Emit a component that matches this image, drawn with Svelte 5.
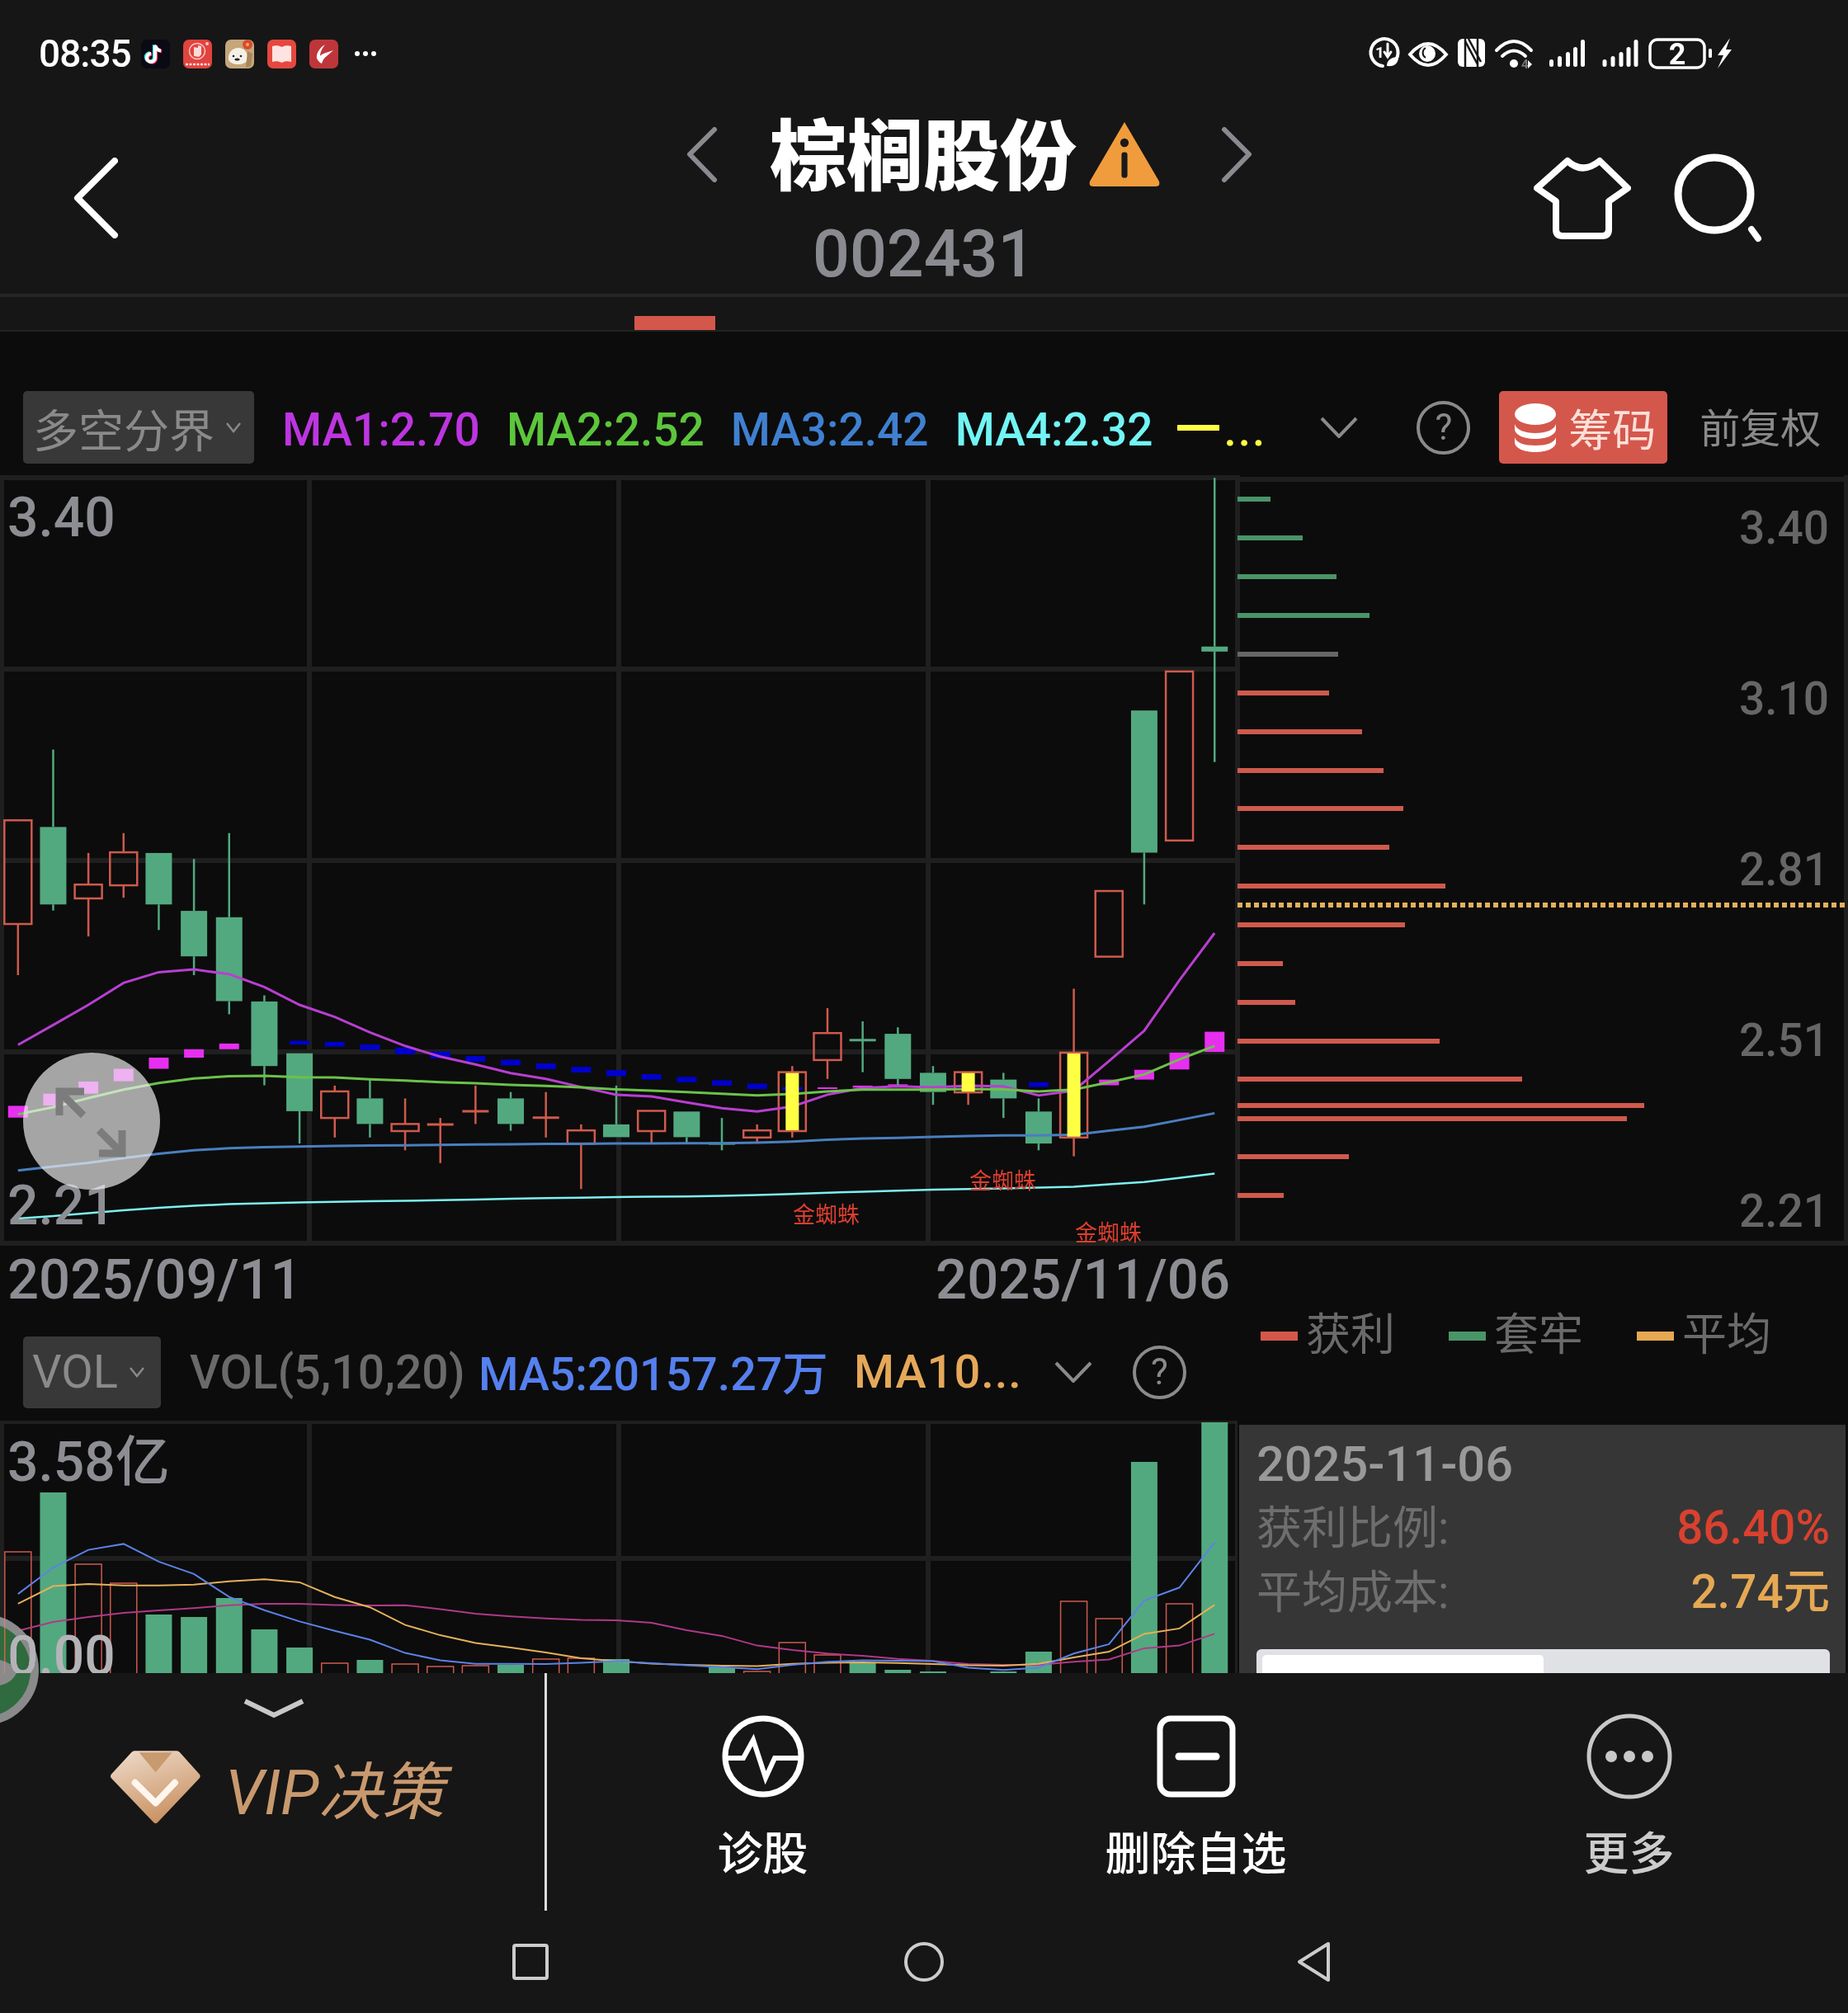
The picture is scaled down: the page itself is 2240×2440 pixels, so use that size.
<script lang="ts">
	const GREEN = '#53a97f';
	const RED = '#cf5a4d';

	// candle slots shared by both charts
	const kx = (i: number) => 21.8 + 42.66 * i;
	// values below were read off a zoomed crop, these bring them back to page y
	const ky = (v: number) => +(880 + v / 2.45).toFixed(1);
	const vy = (v: number) => +(1500 + v / 2.8).toFixed(1);

	// type, wick top, body top, body bottom, wick bottom, yellow marker
	const candles: [string, number, number, number, number, boolean?][] = [
		['r', 280, 280, 588, 740],
		['g', 70, 300, 530, 548],
		['r', 377, 471, 512, 625],
		['r', 318, 375, 473, 510],
		['g', 377, 377, 530, 606],
		['g', 395, 549, 684, 740],
		['g', 318, 568, 817, 856],
		['g', 800, 818, 1010, 1067],
		['g', 972, 972, 1144, 1240],
		['r', 1068, 1085, 1164, 1222],
		['g', 1048, 1106, 1182, 1222],
		['r', 1106, 1182, 1203, 1260],
		['r', 1164, 1183, 1183, 1298],
		['r', 1068, 1144, 1144, 1182],
		['g', 1087, 1106, 1182, 1202],
		['r', 1087, 1163, 1163, 1222],
		['r', 1183, 1201, 1240, 1375],
		['g', 1068, 1183, 1221, 1221],
		['r', 1143, 1143, 1203, 1240],
		['g', 1145, 1145, 1221, 1240],
		['g', 1164, 1240, 1240, 1260],
		['r', 1183, 1201, 1222, 1240],
		['r', 1010, 1028, 1203, 1222, true],
		['r', 838, 912, 992, 1048],
		['g', 877, 933, 933, 1028],
		['g', 895, 914, 1048, 1068],
		['g', 1010, 1030, 1087, 1125],
		['r', 1028, 1028, 1088, 1125, true],
		['g', 1030, 1050, 1106, 1164],
		['g', 1106, 1145, 1240, 1260],
		['r', 780, 970, 1222, 1278, true],
		['r', 490, 490, 685, 685],
		['g', -46, -46, 376, 530],
		['r', -162, -162, 340, 340],
		['g', -737, -236, -221, 107]
	];

	// index, top, bottom, colour of the 多空分界 blocks
	const blocks: [number, number, number, string][] = [
		[0, 1128, 1163, 'm'], [1, 1092, 1127, 'm'], [2, 1056, 1092, 'm'], [3, 1018, 1055, 'm'],
		[4, 985, 1018, 'm'], [5, 960, 985, 'm'], [6, 943, 960, 'm'], [7, 937, 945, 'm'],
		[8, 935, 946, 'b'], [9, 938, 952, 'b'], [10, 946, 962, 'b'], [11, 955, 975, 'b'],
		[12, 967, 987, 'b'], [13, 980, 997, 'b'], [14, 991, 1008, 'b'], [15, 1002, 1019, 'b'],
		[16, 1012, 1029, 'b'], [17, 1022, 1040, 'b'], [18, 1034, 1050, 'b'], [19, 1042, 1058, 'b'],
		[20, 1052, 1068, 'b'], [21, 1062, 1078, 'b'], [22, 1072, 1082, 'b'], [23, 1073, 1078, 'm'],
		[24, 1068, 1074, 'm'], [25, 1064, 1068, 'm'], [28, 1058, 1066, 'b'], [29, 1058, 1072, 'b'],
		[31, 1050, 1067, 'm'], [32, 1021, 1050, 'm'], [33, 970, 1020, 'm'], [34, 908, 968, 'm']
	];

	const maLines = [
		{
			color: '#b83fd0',
			w: 3,
			ys: [947, 888, 828, 763, 731, 723, 737, 775, 828, 864, 910, 950, 982, 1005, 1031, 1048, 1072, 1095, 1100, 1118, 1135, 1145, 1130, 1095, 1075, 1070, 1073, 1068, 1070, 1097, 1083, 995, 905, 755, 615]
		},
		{
			color: '#6cc24a',
			w: 3,
			ys: [1153, 1132, 1105, 1080, 1060, 1047, 1040, 1039, 1043, 1044, 1049, 1053, 1058, 1061, 1066, 1069, 1073, 1079, 1083, 1087, 1092, 1097, 1093, 1085, 1080, 1080, 1080, 1078, 1079, 1085, 1080, 1058, 1035, 990, 950]
		},
		{
			color: '#4a7fc0',
			w: 3,
			ys: [1320, 1308, 1297, 1283, 1270, 1260, 1254, 1251, 1249, 1247, 1246, 1245, 1244, 1243, 1242, 1241, 1241, 1240, 1240, 1239, 1239, 1237, 1234, 1229, 1225, 1223, 1220, 1218, 1216, 1216, 1214, 1202, 1190, 1170, 1150]
		},
		{
			color: '#7ff0f0',
			w: 2.5,
			ys: [1463, 1455, 1447, 1438, 1431, 1425, 1420, 1417, 1415, 1413, 1411, 1410, 1408, 1406, 1404, 1402, 1401, 1399, 1398, 1397, 1395, 1393, 1390, 1386, 1383, 1380, 1377, 1375, 1373, 1371, 1368, 1361, 1354, 1342, 1329]
		}
	];

	const volBars: (['r' | 'g', number] | null)[] = [
		['r', 1881], ['g', 1809], ['r', 1896], ['r', 1919], ['g', 1957], ['g', 1960], ['g', 1937],
		['g', 1975], ['g', 1997], ['r', 2016], ['g', 2012], ['r', 2017], ['r', 2020], ['r', 2019],
		['g', 2018], ['r', 2011], ['r', 2010], ['g', 2011], null, null, ['g', 2021], ['r', 2026],
		['r', 1991], ['r', 2006], ['g', 2016], ['g', 2024], ['g', 2026], null, ['g', 2026],
		['g', 2002], ['r', 1941], ['r', 1962], ['g', 1772], ['r', 1944], ['g', 1724]
	];

	const volLines = [
		{
			color: '#b0388a',
			ys: [1335, 1305, 1288, 1274, 1266, 1258, 1248, 1243, 1243, 1247, 1249, 1248, 1261, 1277, 1286, 1293, 1298, 1299, 1308, 1333, 1352, 1385, 1400, 1412, 1420, 1430, 1437, 1448, 1450, 1450, 1440, 1432, 1394, 1385, 1345]
		},
		{
			color: '#e5b05a',
			ys: [1243, 1183, 1176, 1181, 1181, 1178, 1167, 1160, 1170, 1220, 1255, 1315, 1350, 1376, 1392, 1408, 1428, 1438, 1446, 1450, 1453, 1455, 1447, 1443, 1442, 1444, 1448, 1452, 1453, 1447, 1425, 1406, 1345, 1327, 1247]
		},
		{
			color: '#5b82e6',
			ys: [1210, 1120, 1060, 1040, 1100, 1142, 1220, 1265, 1303, 1335, 1365, 1410, 1435, 1447, 1447, 1448, 1443, 1438, 1445, 1452, 1458, 1465, 1450, 1440, 1435, 1436, 1438, 1460, 1468, 1460, 1412, 1380, 1232, 1188, 1035]
		}
	];

	// y, right end of each price level bar
	const chips: [number, number, string][] = [
		[605, 1540, '#4a9468'], [652, 1579, '#4a9468'], [699, 1620, '#4a9468'], [746, 1660, '#4a9468'],
		[793, 1622, '#666666'], [840, 1611, RED], [887, 1651, RED], [934, 1677, RED], [980, 1701, RED],
		[1027, 1684, RED], [1074, 1752, RED], [1121, 1703, RED], [1168, 1555, RED], [1215, 1570, RED],
		[1262, 1745, RED], [1308, 1845, RED], [1340, 1993, RED], [1356, 1972, RED], [1402, 1635, RED],
		[1449, 1556, RED]
	];

	const priceLabels: [string, number][] = [
		['3.40', 659], ['3.10', 866], ['2.81', 1073], ['2.51', 1280], ['2.21', 1487]
	];

	const kGridV = [2, 375, 750, 1125, 1500];
	const kGridH = [579, 811, 1043, 1275, 1507];

	const points = (ys: number[], conv: (v: number) => number) =>
		ys.map((v, i) => `${kx(i).toFixed(1)},${conv(v)}`).join(' ');
</script>

<div class="page">
	<header class="top">
		<div class="status">
			<span class="clock">08:35</span>
			<div class="apps">
				<svg viewBox="0 0 35 35" class="app">
					<rect width="35" height="35" rx="7" fill="#0a0a14" />
					<g fill="none" stroke-width="4">
						<path d="M17 7v15a5 5 0 1 1-5-5M17 7c1 4 3 6 7 6.500" stroke="#3fe0e0" transform="translate(-1.200 -.8)" />
						<path d="M17 7v15a5 5 0 1 1-5-5M17 7c1 4 3 6 7 6.500" stroke="#f0335a" transform="translate(1.200 .8)" />
						<path d="M17 7v15a5 5 0 1 1-5-5M17 7c1 4 3 6 7 6.500" stroke="#fff" />
					</g>
				</svg>
				<svg viewBox="0 0 35 35" class="app">
					<rect width="35" height="35" rx="7" fill="#e2433e" />
					<circle cx="17" cy="14" r="9.500" fill="none" stroke="#f7c9c4" stroke-width="1.500" />
					<path d="M13 9l5 1 0-3 4 1 0 10-3 3-6-1z" fill="#f8dcd8" />
					<circle cx="29" cy="5" r="2" fill="#f7c9c4" />
					<path d="M3 30h29" stroke="#fbe3e0" stroke-width="2.500" stroke-dasharray="3 1.500" />
				</svg>
				<svg viewBox="0 0 35 35" class="app">
					<rect width="35" height="35" rx="7" fill="#c6a67a" />
					<path d="M4 24c-1-8 5-14 12-14s12 6 11 14c-2 8-21 8-23 0z" fill="#f5f0e6" />
					<path d="M27 14l6 3-2 15-6 2z" fill="#a98558" />
					<circle cx="27" cy="6" r="6" fill="#d84a32" />
					<circle cx="27" cy="6" r="2" fill="#f0b040" />
					<circle cx="10" cy="20" r="1.300" fill="#222" />
					<circle cx="19" cy="20" r="1.300" fill="#222" />
					<ellipse cx="14.500" cy="24" rx="3" ry="1.500" fill="#222" />
				</svg>
				<svg viewBox="0 0 35 35" class="app">
					<rect width="35" height="35" rx="7" fill="#e5483f" />
					<path d="M6 8c4-1 8-1 11.500 1 3.500-2 8-2 11.500-1v19c-4-1-8-1-11.500 1-3.500-2-8-2-11.500-1z" fill="#fde4e0" />
				</svg>
				<svg viewBox="0 0 35 35" class="app">
					<rect width="35" height="35" rx="7" fill="#bf363a" />
					<path d="M19 6c-5 3-9 8-10 13-1 4 2 8 6 10 1-4 3-7 6-9l8-7-9 3c-3 1-6 2-7 4 0-5 3-10 6-14z" fill="#fff" />
				</svg>
			</div>
			<span class="more-dots"><i></i><i></i><i></i></span>
			<svg class="sys" viewBox="0 0 460 60">
				<g fill="none" stroke="#fff" stroke-linecap="round">
					<path d="M41 40A16.500 16.500 0 1 0 27 45" stroke-width="4" />
					<path d="M33 18v16M29 28l4 6 4-6" stroke-width="3" />
				</g>
				<text x="18" y="35" class="sys-num">1</text>
				<path d="M32 45c0-7 5-11 14-11 0 8-5 12-14 11z" fill="#fff" />
				<path d="M60 31Q82 5 104 31Q82 57 60 31Z" fill="none" stroke="#fff" stroke-width="4" />
				<circle cx="81" cy="30" r="10" fill="#fff" />
				<path d="M79 23a7 7 0 0 0 0 12" fill="none" stroke="#161616" stroke-width="2" />
				<rect x="118" y="12" width="33" height="34" rx="6" fill="#fff" />
				<path d="M127 12v34M142 12v34" stroke="#161616" stroke-width="2.500" />
				<path d="M127 15l15 28M131 12l15 28" stroke="#161616" stroke-width="2.500" />
				<g fill="none" stroke="#fff" stroke-width="4" stroke-linecap="round">
					<path d="M165 26Q186 4 207 26" />
					<path d="M172 33Q186 20 200 33" />
				</g>
				<circle cx="186" cy="42" r="5" fill="#fff" />
				<text x="195" y="48" class="sys-small">4</text>
				<path d="M203 38l5 5-5 5z" fill="#fff" />
				{#each [0, 64.5] as off}
					<g fill="#fff" transform="translate({off} 0)">
						<rect x="229" y="37" width="5" height="9" rx="2.500" />
						<rect x="239" y="33" width="5" height="13" rx="2.500" />
						<rect x="249" y="28" width="5" height="18" rx="2.500" />
						<rect x="258" y="22" width="5" height="24" rx="2.500" />
						<rect x="267" y="13" width="5" height="33" rx="2.500" />
					</g>
				{/each}
				<rect x="351" y="13" width="66" height="34" rx="9" fill="none" stroke="#fff" stroke-width="3.500" />
				<text x="384" y="43" class="sys-batt">2</text>
				<rect x="422" y="24" width="4" height="11" rx="1.500" fill="#fff" />
				<path d="M448 11L433 32h7L433 48 450 25h-7z" fill="#fff" />
			</svg>
		</div>

		<div class="nav">
			<svg class="back" viewBox="0 0 54 98">
				<path d="M50 4L5 49l45 45" fill="none" stroke="#fff" stroke-width="8" stroke-linecap="round" stroke-linejoin="round" />
			</svg>
			<div class="title-block">
				<div class="title-row">
					<svg class="side" viewBox="0 0 38 67">
						<path d="M34 3L4 33l30 31" fill="none" stroke="#8a8b90" stroke-width="6" stroke-linecap="round" stroke-linejoin="round" />
					</svg>
					<h1>棕榈股份</h1>
					<svg class="warn" viewBox="0 0 86 80" preserveAspectRatio="none">
						<path d="M43 3L84 72q2 6-4 6H6q-6 0-4-6z" fill="#f09c3c" />
						<circle cx="43" cy="27" r="5" fill="#1a1a1a" />
						<rect x="39.500" y="38" width="7" height="30" rx="3" fill="#1a1a1a" />
					</svg>
					<svg class="side side-r" viewBox="0 0 38 67">
						<path d="M4 3l30 30L4 64" fill="none" stroke="#8a8b90" stroke-width="6" stroke-linecap="round" stroke-linejoin="round" />
					</svg>
				</div>
				<div class="code">002431</div>
			</div>
			<div class="nav-actions">
				<svg class="shirt" viewBox="0 0 118 100">
					<path d="M41 5Q59 22 80 5L114 38 91 54V88q0 8-8 8H35q-8 0-8-8V54L4 38Z" fill="none" stroke="#fff" stroke-width="8" stroke-linejoin="round" />
				</svg>
				<svg class="search" viewBox="0 0 110 110">
					<circle cx="50" cy="50" r="44" fill="none" stroke="#fff" stroke-width="9" />
					<path d="M95 93l8 11" stroke="#fff" stroke-width="8" stroke-linecap="round" />
				</svg>
			</div>
		</div>
		<div class="tabs"><span class="tab-mark"></span></div>
	</header>

	<main class="body">
		<div class="toolbar">
			<div class="chip chip-ma">多空分界<svg class="caret" viewBox="0 0 18 14"><path d="M1 2l8 10 8-10" /></svg></div>
			<span class="ma" style="color:#bd35e0">MA1:2.70</span>
			<span class="ma" style="color:#5cc63c">MA2:2.52</span>
			<span class="ma" style="color:#3f80d0">MA3:2.42</span>
			<span class="ma" style="color:#72f5f5">MA4:2.32</span>
			<span class="ma5-dash"></span>
			<span class="ma ma5-dots">...</span>
			<svg class="chev chev-ma" viewBox="0 0 46 26"><path d="M2 2l21 22L44 2" /></svg>
			<span class="help help-ma">?</span>
			<button class="chouma">
				<svg viewBox="0 0 52 60" class="coins">
					<ellipse cx="26" cy="14" rx="25" ry="13" fill="#fff" />
					<path d="M1 26c2 7 12 11 25 11s23-4 25-11v6c0 7-11 12-25 12S1 39 1 32z" fill="#fff" />
					<path d="M1 42c2 7 12 10 25 10s23-3 25-10v6c0 7-11 12-25 12S1 55 1 48z" fill="#fff" />
				</svg>
				筹码
			</button>
			<span class="fuquan">前复权</span>
		</div>

		<div class="charts">
			<div class="left">
				<div class="kline">
					<svg viewBox="0 576 1500 934" class="chart-svg">
						{#each kGridV as x}
							<line x1={x} x2={x} y1="576" y2="1510" class="grid" />
						{/each}
						{#each kGridH as y}
							<line x1="0" x2="1502" y1={y} y2={y} class="grid" />
						{/each}
						{#each blocks as [i, t, b, c]}
							<rect x={kx(i) - 12} y={ky(t)} width="24" height={ky(b) - ky(t)} fill={c === 'm' ? '#e72ff0' : '#0000cc'} />
						{/each}
						{#each candles as [type, wt, bt, bb, wb, marker], i}
							{@const col = type === 'g' ? GREEN : RED}
							<line x1={kx(i)} x2={kx(i)} y1={ky(wt)} y2={ky(bt)} stroke={col} stroke-width="2.500" />
							<line x1={kx(i)} x2={kx(i)} y1={ky(bb)} y2={ky(wb)} stroke={col} stroke-width="2.500" />
							{#if bt === bb}
								<line x1={kx(i) - 16} x2={kx(i) + 16} y1={ky(bt)} y2={ky(bt)} stroke={col} stroke-width="3" />
							{:else if type === 'g'}
								<rect x={kx(i) - 16} y={ky(bt)} width="32" height={ky(bb) - ky(bt)} fill={col} />
							{:else}
								<rect x={kx(i) - 16.500} y={ky(bt)} width="33" height={ky(bb) - ky(bt)} fill="none" stroke={col} stroke-width="2.500" />
							{/if}
						{/each}
						{#each maLines as l}
							<polyline points={points(l.ys, ky)} fill="none" stroke={l.color} stroke-width={l.w} />
						{/each}
						{#each candles as [, , bt, bb, , marker], i}
							{#if marker}
								<rect x={kx(i) - 8} y={ky(bt) + 1} width="16" height={ky(bb) - ky(bt) - 2} fill="#ffff44" />
							{/if}
						{/each}
						<text x="961" y="1482" class="spider">金蜘蛛</text>
						<text x="1175" y="1441" class="spider">金蜘蛛</text>
						<text x="1303" y="1504" class="spider">金蜘蛛</text>
						<text x="9" y="650" class="axis">3.40</text>
						<text x="9" y="1484" class="axis">2.21</text>
					</svg>
					<div class="float-ball">
						<svg viewBox="0 0 166 166">
							<path d="M44 76V47h30M47 50l26 26" fill="none" stroke="#7c7c7c" stroke-width="9" />
							<path d="M120 94v28H92M118 120l-26-26" fill="none" stroke="#7c7c7c" stroke-width="9" />
						</svg>
					</div>
				</div>

				<div class="dates">
					<span>2025/09/11</span>
					<span>2025/11/06</span>
				</div>

				<div class="vol-bar">
					<div class="chip chip-vol">VOL<svg class="caret" viewBox="0 0 18 14"><path d="M1 2l8 10 8-10" /></svg></div>
					<span class="vol-name">VOL(5,10,20)</span>
					<span class="vol-ma5">MA5:20157.27万</span>
					<span class="vol-ma10">MA10...</span>
					<svg class="chev chev-vol" viewBox="0 0 46 26"><path d="M2 2l21 22L44 2" /></svg>
					<span class="help help-vol">?</span>
				</div>

				<div class="vol">
					<svg viewBox="0 1722 1500 306" class="chart-svg">
						{#each kGridV as x}
							<line x1={x} x2={x} y1="1722" y2="2028" class="grid" />
						{/each}
						<line x1="0" x2="1502" y1="1723" y2="1723" class="grid" />
						<line x1="0" x2="1502" y1="1889" y2="1889" class="grid" />
						{#each volBars as bar, i}
							{#if bar}
								{#if bar[0] === 'g'}
									<rect x={kx(i) - 16} y={bar[1]} width="32" height={2040 - bar[1]} fill={GREEN} />
								{:else}
									<rect x={kx(i) - 16} y={bar[1]} width="32" height={2040 - bar[1]} fill="none" stroke={RED} stroke-width="1.500" />
								{/if}
							{/if}
						{/each}
						{#each volLines as l}
							<polyline points={points(l.ys, vy)} fill="none" stroke={l.color} stroke-width="2" />
						{/each}
						<text x="9" y="1795" class="axis">3.58亿</text>
						<text x="9" y="2030" class="axis zero">0.00</text>
					</svg>
				</div>
			</div>

			<div class="right">
				<svg viewBox="1500 576 740 934" class="chart-svg">
					<line x1="1500" x2="1500" y1="576" y2="1510" class="grid" />
					<line x1="1500" x2="2240" y1="581" y2="581" class="grid" />
					<line x1="1500" x2="2240" y1="1507" y2="1507" class="grid" />
					<line x1="2238" x2="2238" y1="576" y2="1510" class="grid" stroke-width="3" />
					{#each chips as [y, end, color]}
						<rect x="1500" y={y - 3} width={end - 1500} height="6" fill={color} />
					{/each}
					<line x1="1500" x2="2238" y1="1097" y2="1097" stroke="#e5b05a" stroke-width="6" stroke-dasharray="6 4" />
					{#each priceLabels as [label, y]}
						<text x="2217" y={y} class="price">{label}</text>
					{/each}
				</svg>

				<div class="legend">
					<div class="lg"><i style="background:#d4574c"></i>获利</div>
					<div class="lg"><i style="background:#4a9468"></i>套牢</div>
					<div class="lg"><i style="background:#e5a853"></i>平均</div>
				</div>

				<div class="info">
					<div class="info-date">2025-11-06</div>
					<div class="info-row">
						<span>获利比例:</span><b class="profit">86.40%</b>
					</div>
					<div class="info-row second">
						<span>平均成本:</span><b class="cost">2.74元</b>
					</div>
					<div class="progress"><div class="progress-fill"></div></div>
				</div>
			</div>
		</div>
	</main>

	<footer class="foot">
		<div class="foot-top">
			<div class="vip">
				<svg class="vip-chev" viewBox="0 0 76 24">
					<path d="M3 3l35 17L73 3" fill="none" stroke="#c8c8c8" stroke-width="6" />
				</svg>
				<div class="vip-logo">
					<svg class="diamond" viewBox="0 0 333 266">
						<defs>
							<linearGradient id="dia" x1="0.2" y1="0" x2="0.6" y2="1">
								<stop offset="0" stop-color="#ecd8c6" />
								<stop offset="1" stop-color="#c88f5e" />
							</linearGradient>
						</defs>
						<path d="M90 0H244Q250 0 254 5L326 85Q332 93 326 100L175 260Q167 268 159 260L6 100Q0 93 6 85L80 5Q84 0 90 0Z" fill="url(#dia)" />
						<path d="M107 6H227L167 78Z" fill="#c89a6f" />
						<path d="M92 116L167 190 237 116" fill="none" stroke="#fff6ee" stroke-width="24" stroke-linecap="round" stroke-linejoin="round" />
					</svg>
					<span class="vip-text">VIP决策</span>
				</div>
			</div>
			<div class="actions">
				<div class="action">
					<svg viewBox="0 0 100 100">
						<circle cx="50" cy="50" r="46" fill="none" stroke="#fff" stroke-width="7" />
						<path d="M6 52H26L38 30 53 76 64 52H94" fill="none" stroke="#fff" stroke-width="6" stroke-linejoin="miter" />
					</svg>
					<span>诊股</span>
				</div>
				<div class="action">
					<svg viewBox="0 0 100 100">
						<rect x="6" y="4" width="88" height="92" rx="13" fill="none" stroke="#fff" stroke-width="7" />
						<path d="M29 50H74" stroke="#fff" stroke-width="9" stroke-linecap="round" />
					</svg>
					<span>删除自选</span>
				</div>
				<div class="action dim">
					<svg viewBox="0 0 106 106">
						<circle cx="53" cy="53" r="49" fill="none" stroke="#c8c8c8" stroke-width="5" />
						<circle cx="31" cy="53" r="7" fill="#c8c8c8" />
						<circle cx="53" cy="53" r="7" fill="#c8c8c8" />
						<circle cx="75" cy="53" r="7" fill="#c8c8c8" />
					</svg>
					<span>更多</span>
				</div>
			</div>
		</div>
		<div class="sysnav">
			<svg width="44" height="44" viewBox="0 0 44 44"><rect x="2" y="2" width="40" height="40" rx="2" fill="none" stroke="#ccc" stroke-width="4" /></svg>
			<svg width="48" height="48" viewBox="0 0 48 48"><circle cx="24" cy="24" r="22" fill="none" stroke="#ccc" stroke-width="4" /></svg>
			<svg class="nav-back" width="40" height="50" viewBox="0 0 40 50"><path d="M38 3V47L3 25Z" fill="none" stroke="#ccc" stroke-width="4" stroke-linejoin="round" /></svg>
		</div>
	</footer>

	<div class="side-ball">
		<svg viewBox="0 0 50 134">
			<circle cx="-20" cy="67" r="62" fill="#2f6b3e" stroke="#8a8a8a" stroke-width="10" />
			<path d="M0 55q16 4 21 14q-6 14-21 17z" fill="#8a8a8a" />
		</svg>
	</div>
</div>

<style>
	:global(body) {
		background: #0c0c0c;
	}

	.page {
		position: relative;
		width: 2240px;
		height: 2440px;
		overflow: hidden;
		display: flex;
		flex-direction: column;
		font-family: Roboto, 'Noto Sans CJK SC', sans-serif;
		background: #0c0c0c;
	}

	.top {
		height: 402px;
		flex: none;
		background: #161616;
		box-sizing: border-box;
		border-bottom: 2px solid #222;
	}

	.status {
		height: 130px;
		display: flex;
		align-items: center;
		padding-left: 47px;
		box-sizing: border-box;
	}

	.clock {
		color: #fff;
		font-size: 46px;
		font-weight: 500;
		width: 124px;
		letter-spacing: -1px;
	}

	.apps {
		display: flex;
		gap: 16px;
	}

	.app {
		width: 35px;
		height: 35px;
		display: block;
	}

	.more-dots {
		display: flex;
		gap: 4px;
		margin-left: 20px;
	}

	.more-dots i {
		width: 6px;
		height: 6px;
		border-radius: 50%;
		background: #fff;
	}

	.sys {
		width: 460px;
		height: 60px;
		margin-left: auto;
		margin-right: 131px;
	}

	.sys-num {
		font-size: 19px;
		font-weight: 700;
		fill: #fff;
	}

	.sys-small {
		font-size: 15px;
		fill: #777;
		font-weight: 700;
	}

	.sys-batt {
		font-size: 36px;
		font-weight: 700;
		fill: #fff;
		text-anchor: middle;
	}

	.nav {
		height: 226px;
		display: grid;
		grid-template-columns: 832px 687px 1fr;
		position: relative;
		border-bottom: 4px solid #252525;
		box-sizing: content-box;
	}

	.back {
		width: 54px;
		height: 98px;
		margin: 61px 0 0 89px;
	}

	.title-row {
		display: flex;
		align-items: center;
		height: 116px;
	}

	.side {
		width: 38px;
		height: 67px;
		flex: none;
		margin-top: -1px;
	}

	h1 {
		margin: 0 0 0 63px;
		padding-top: 8px;
		color: #fff;
		font-size: 93px;
		font-weight: 900;
		line-height: 116px;
		white-space: nowrap;
	}

	.warn {
		width: 88px;
		height: 83px;
		flex: none;
		margin: -3px 0 0 14px;
	}

	.side-r {
		margin-left: 73px;
	}

	.code {
		margin: 16px 0 0 153px;
		color: #8a8b90;
		font-size: 79px;
		line-height: 92px;
		font-weight: 500;
	}

	.nav-actions {
		display: flex;
		align-items: flex-start;
		padding: 60px 0 0 340px;
	}

	.shirt {
		width: 118px;
		height: 100px;
	}

	.search {
		width: 110px;
		height: 110px;
		margin: -5px 0 0 51px;
	}

	.tabs {
		height: 40px;
		display: flex;
		align-items: flex-end;
		padding-left: 769px;
	}

	.tab-mark {
		width: 98px;
		height: 17px;
		background: #d4574c;
	}

	.body {
		height: 1626px;
		flex: none;
		overflow: hidden;
		padding-top: 72px;
		box-sizing: border-box;
	}

	.toolbar {
		height: 88px;
		display: flex;
		align-items: center;
		margin-bottom: 14px;
		padding-left: 28px;
	}

	.chip {
		height: 88px;
		background: #383838;
		border-radius: 5px;
		box-sizing: border-box;
		display: flex;
		align-items: center;
		color: #8a8a8a;
		font-size: 54px;
		flex: none;
		white-space: nowrap;
	}

	.chip-ma {
		width: 280px;
		padding-left: 12px;
		font-size: 55px;
	}

	.caret {
		width: 18px;
		height: 14px;
		margin-left: 14px;
	}

	.caret path {
		fill: none;
		stroke: #8a8a8a;
		stroke-width: 2.500;
	}

	.ma {
		font-size: 55px;
		font-weight: 500;
		margin: 6px 0 0 34px;
		white-space: nowrap;
	}

	.ma + .ma {
		margin-left: 32px;
	}

	.ma5-dash {
		width: 51px;
		height: 7px;
		background: #ffff44;
		margin-left: 29px;
	}

	.ma.ma5-dots {
		color: #ffff44;
		margin-left: 6px;
		letter-spacing: 2px;
	}

	.chev {
		width: 46px;
		height: 26px;
		flex: none;
	}

	.chev path {
		fill: none;
		stroke: #8a8a8a;
		stroke-width: 4;
	}

	.chev-ma {
		margin-left: 65px;
	}

	.help {
		width: 65px;
		height: 65px;
		box-sizing: border-box;
		border: 4px solid #8a8a8a;
		border-radius: 50%;
		color: #8a8a8a;
		font-size: 44px;
		font-weight: 400;
		line-height: 56px;
		text-align: center;
		flex: none;
	}

	.help-ma {
		margin-left: 71px;
	}

	.chouma {
		width: 204px;
		height: 88px;
		margin-left: 35px;
		border: none;
		padding: 0 0 0 18px;
		border-radius: 5px;
		background: #d4574c;
		color: #fbe0d8;
		font: inherit;
		font-size: 53px;
		display: flex;
		align-items: center;
		gap: 14px;
		flex: none;
	}

	.coins {
		width: 52px;
		height: 60px;
		flex: none;
	}

	.fuquan {
		margin: 0 0 6px 39px;
		color: #8a8a8a;
		font-size: 49px;
		white-space: nowrap;
	}

	.charts {
		display: grid;
		grid-template-columns: 1500px 740px;
		height: 1452px;
	}

	.left {
		display: grid;
		grid-template-rows: 934px 82px 130px 306px;
		min-width: 0;
	}

	.kline {
		position: relative;
	}

	.chart-svg {
		display: block;
		width: 100%;
		height: 100%;
		overflow: hidden;
	}

	.chart-svg .grid {
		stroke: #1f1f1f;
		stroke-width: 6;
	}

	.axis {
		font-size: 66px;
		font-weight: 500;
		fill: #8d8e93;
	}

	.axis.zero {
		fill: #b4b4b8;
	}

	.spider {
		font-size: 27px;
		fill: #dc3f2e;
	}

	.price {
		font-size: 55px;
		font-weight: 500;
		fill: #666;
		text-anchor: end;
	}

	.float-ball {
		position: absolute;
		left: 28px;
		top: 700px;
		width: 166px;
		height: 166px;
		border-radius: 50%;
		background: rgba(242, 242, 242, 0.67);
	}

	.float-ball svg {
		display: block;
		width: 166px;
		height: 166px;
	}

	.dates {
		display: flex;
		justify-content: space-between;
		align-items: center;
		padding: 0 9px 0 9px;
		color: #8d8e93;
		font-size: 67px;
		font-weight: 500;
	}

	.vol-bar {
		display: flex;
		align-items: center;
		padding: 12px 0 0 28px;
		font-size: 56px;
		font-weight: 500;
		white-space: nowrap;
	}

	.chip-vol {
		width: 167px;
		height: 87px;
		padding-left: 11px;
		font-size: 56px;
		font-weight: 400;
	}

	.vol-name {
		margin-left: 35px;
		color: #6a6a6a;
		width: 350px;
		font-size: 57px;
	}

	.vol-ma5 {
		color: #5580ee;
		width: 455px;
		margin-bottom: 4px;
		font-size: 55.5px;
	}

	.vol-ma10 {
		color: #e5a85a;
		width: 243px;
		letter-spacing: 1px;
	}

	.help-vol {
		margin-left: 49px;
	}

	.vol {
		min-height: 0;
	}

	.right {
		display: grid;
		grid-template-rows: 934px 212px 306px;
		min-width: 0;
	}

	.legend {
		display: grid;
		grid-template-columns: repeat(3, 228px);
		padding: 79px 0 0 28px;
		align-items: start;
	}

	.lg {
		display: flex;
		align-items: center;
		gap: 10px;
		color: #6a6a6a;
		font-size: 54px;
		line-height: 60px;
	}

	.lg i {
		width: 45px;
		height: 11px;
		flex: none;
	}

	.info {
		margin: 5px 3px 0 2px;
		background: #363636;
		padding: 20px 19px 0 21px;
		overflow: hidden;
	}

	.info-date {
		color: #999;
		font-size: 59.5px;
		font-weight: 500;
		line-height: 56px;
	}

	.info-row {
		display: flex;
		justify-content: space-between;
		margin-top: 21px;
		font-size: 55px;
		line-height: 56px;
		color: #6e6e6e;
	}

	.info-row.second {
		margin-top: 22px;
	}

	.info-row b {
		font-weight: 500;
		font-size: 56.5px;
	}

	.profit {
		color: #d9412f;
	}

	.cost {
		color: #e5a853;
	}

	.progress {
		margin-top: 41px;
		height: 60px;
		background: #e0e1e5;
		border-radius: 6px;
		padding: 7px 0 0 7px;
		box-sizing: border-box;
	}

	.progress-fill {
		width: 341px;
		height: 60px;
		background: #fff;
		border-radius: 5px;
	}

	.foot {
		flex: 1;
		background: #161616;
		display: flex;
		flex-direction: column;
	}

	.foot-top {
		height: 288px;
		display: flex;
	}

	.vip {
		width: 660px;
		flex: none;
		border-right: 3px solid #ddd;
		box-sizing: content-box;
	}

	.vip-chev {
		display: block;
		width: 76px;
		height: 24px;
		margin: 31px 0 0 294px;
	}

	.vip-logo {
		display: flex;
		align-items: flex-start;
		margin: 39px 0 0 133px;
	}

	.diamond {
		width: 111px;
		height: 89px;
		flex: none;
	}

	.vip-text {
		margin: 6px 0 0 29px;
		color: #c9996e;
		font-size: 76px;
		line-height: 90px;
		font-style: italic;
		font-weight: 400;
		white-space: nowrap;
	}

	.actions {
		display: grid;
		grid-template-columns: repeat(3, 525px);
		margin-left: -1px;
	}

	.action {
		display: flex;
		flex-direction: column;
		align-items: center;
		padding-top: 51px;
		color: #fff;
		font-size: 55px;
		font-weight: 500;
		line-height: 60px;
	}

	.action svg {
		width: 100px;
		height: 100px;
		margin-bottom: 38px;
	}

	.action.dim {
		color: #ccc;
	}

	.action.dim svg {
		width: 106px;
		height: 106px;
		margin: -3px 0 35px;
	}

	.sysnav {
		display: flex;
		justify-content: center;
		align-items: center;
		gap: 431px;
		height: 124px;
		padding-right: 8px;
		box-sizing: border-box;
	}

	.nav-back {
		margin-left: -3px;
	}

	.side-ball {
		position: absolute;
		left: 0;
		top: 1957px;
		width: 50px;
		height: 134px;
		mix-blend-mode: lighten;
	}

	.side-ball svg {
		display: block;
		width: 50px;
		height: 134px;
	}
</style>
